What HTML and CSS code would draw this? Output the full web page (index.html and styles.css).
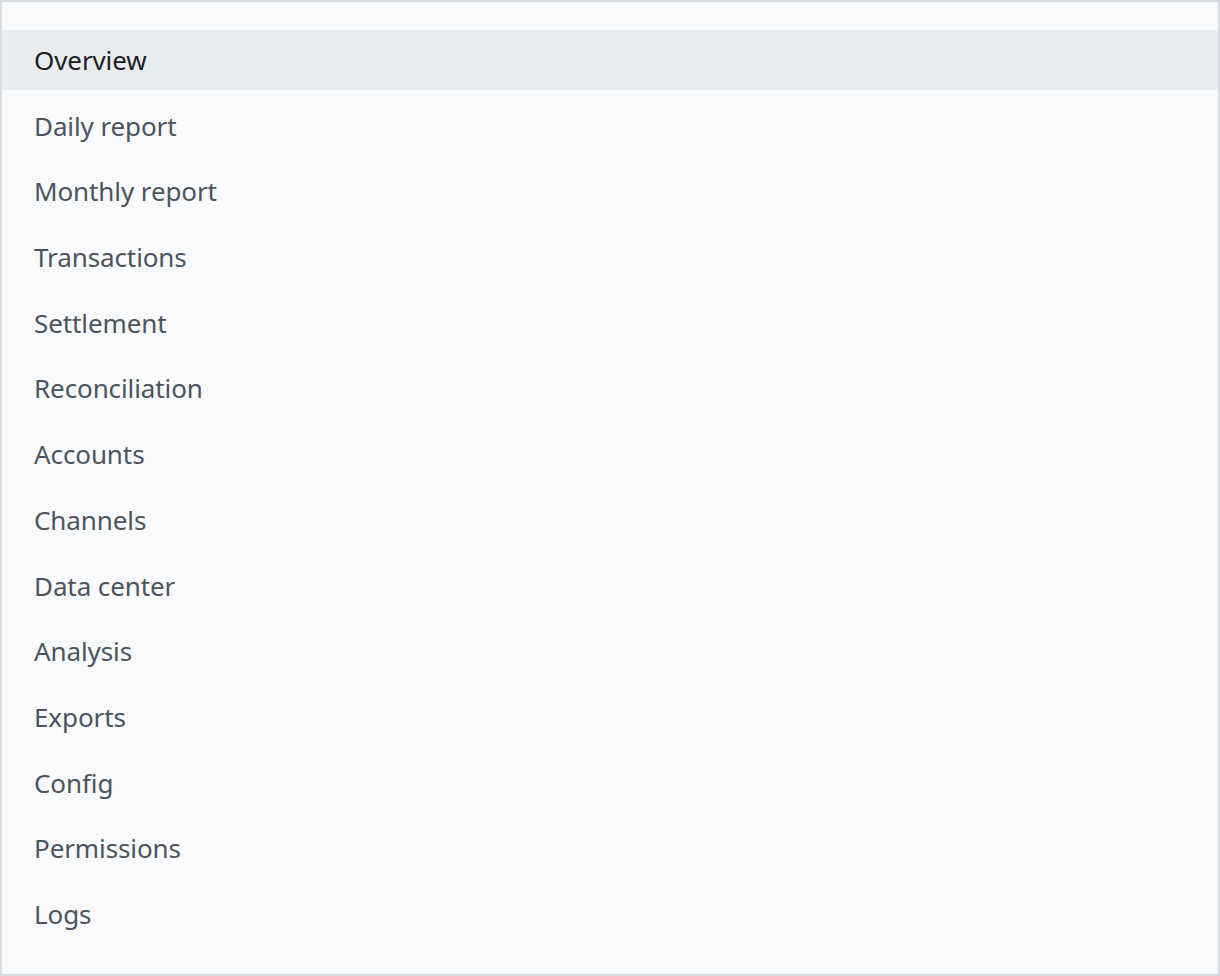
FILE: index.html
```html
<!DOCTYPE html>
<html>
<head>
<meta charset="utf-8">
<link rel="stylesheet" href="styles.css">
</head>
<body>
<nav class="sidebar">
  <ul class="menu">
    <li class="item active">Overview</li>
    <li class="item">Daily report</li>
    <li class="item">Monthly report</li>
    <li class="item">Transactions</li>
    <li class="item">Settlement</li>
    <li class="item">Reconciliation</li>
    <li class="item">Accounts</li>
    <li class="item">Channels</li>
    <li class="item">Data center</li>
    <li class="item">Analysis</li>
    <li class="item">Exports</li>
    <li class="item">Config</li>
    <li class="item">Permissions</li>
    <li class="item">Logs</li>
  </ul>
</nav>
</body>
</html>
```

FILE: styles.css
```css
html, body {
  margin: 0;
  padding: 0;
  background: #ffffff;
}
.sidebar {
  box-sizing: border-box;
  width: 1220px;
  height: 976px;
  background: #f8fafb;
  border: 2px solid #d6dce2;
  padding: 28px 0 0 0;
  font-family: "Noto Sans", "Open Sans", sans-serif;
}
.menu {
  list-style: none;
  margin: 0;
  padding: 0;
  display: flex;
  flex-direction: column;
  gap: 5.7px;
}
.item {
  height: 60px;
  display: flex;
  align-items: center;
  padding-left: 32px;
  font-size: 26px;
  color: #4b5560;
  letter-spacing: -0.1px;
}
.item.active {
  background: #e9ecef;
  color: #1b2028;
}
```
